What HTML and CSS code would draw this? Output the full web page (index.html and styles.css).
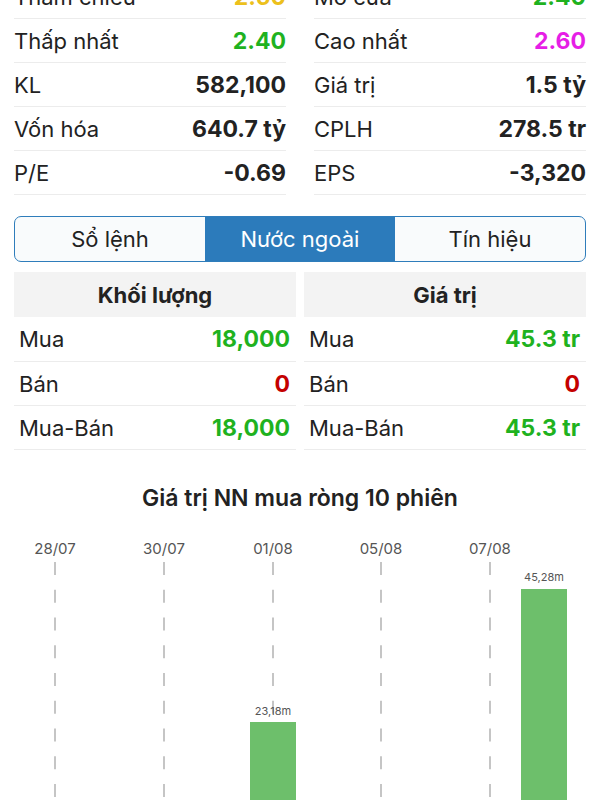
FILE: index.html
```html
<!DOCTYPE html>
<html lang="vi">

<head>
    <meta charset="UTF-8">
    <meta name="viewport" content="width=device-width, initial-scale=1.0">
    <title>Chi tiết mã</title>
    <link rel="stylesheet" href="styles.css">
</head>

<body>
    <div class="stats">
        <div class="stat-col">
            <div class="stat-row"><span>Tham chiếu</span><b class="ref">2.50</b></div>
            <div class="stat-row"><span>Thấp nhất</span><b class="up">2.40</b></div>
            <div class="stat-row"><span>KL</span><b>582,100</b></div>
            <div class="stat-row"><span>Vốn hóa</span><b>640.7 tỷ</b></div>
            <div class="stat-row"><span>P/E</span><b>-0.69</b></div>
        </div>
        <div class="stat-col">
            <div class="stat-row"><span>Mở cửa</span><b class="up">2.40</b></div>
            <div class="stat-row"><span>Cao nhất</span><b class="ceil">2.60</b></div>
            <div class="stat-row"><span>Giá trị</span><b>1.5 tỷ</b></div>
            <div class="stat-row"><span>CPLH</span><b>278.5 tr</b></div>
            <div class="stat-row"><span>EPS</span><b>-3,320</b></div>
        </div>
    </div>

    <div class="tabs">
        <div class="tab">Sổ lệnh</div>
        <div class="tab active">Nước ngoài</div>
        <div class="tab">Tín hiệu</div>
    </div>

    <div class="foreign">
        <div class="foreign-col">
            <div class="foreign-head">Khối lượng</div>
            <div class="foreign-row"><span>Mua</span><b class="up">18,000</b></div>
            <div class="foreign-row"><span>Bán</span><b class="down">0</b></div>
            <div class="foreign-row"><span>Mua-Bán</span><b class="up">18,000</b></div>
        </div>
        <div class="foreign-col">
            <div class="foreign-head">Giá trị</div>
            <div class="foreign-row"><span>Mua</span><b class="up">45.3 tr</b></div>
            <div class="foreign-row"><span>Bán</span><b class="down">0</b></div>
            <div class="foreign-row"><span>Mua-Bán</span><b class="up">45.3 tr</b></div>
        </div>
    </div>

    <h2 class="chart-title">Giá trị NN mua ròng 10 phiên</h2>

    <svg class="chart" width="600" height="340" viewBox="0 0 600 340">
        <g class="grid">
            <line x1="55" y1="33" x2="55" y2="332" />
            <line x1="164" y1="33" x2="164" y2="332" />
            <line x1="273" y1="33" x2="273" y2="332" />
            <line x1="381" y1="33" x2="381" y2="332" />
            <line x1="490" y1="33" x2="490" y2="332" />
        </g>
        <g class="dates">
            <text x="55" y="25">28/07</text>
            <text x="164" y="25">30/07</text>
            <text x="273" y="25">01/08</text>
            <text x="381" y="25">05/08</text>
            <text x="490" y="25">07/08</text>
        </g>
        <g class="bars">
            <rect x="250" y="193" width="46" height="139" />
            <rect x="521" y="60" width="46" height="272" />
        </g>
        <g class="bar-labels">
            <text x="273" y="186">23,18m</text>
            <text x="544" y="52">45,28m</text>
        </g>
    </svg>
</body>

</html>
```

FILE: styles.css
```css
body {
    margin: 0;
    width: 600px;
    height: 800px;
    overflow: hidden;
    background: #fff;
    color: #222;
    font-family: 'Inter', 'Liberation Sans', sans-serif;
}

.stats {
    display: grid;
    grid-template-columns: 1fr 1fr;
    column-gap: 28px;
    padding: 0 14px;
    margin-top: -25px;
}

.stat-row {
    display: flex;
    justify-content: space-between;
    align-items: center;
    height: 43px;
    border-bottom: 1px solid #ececec;
    font-size: 22px;
}

.stat-row b {
    font-size: 23px;
    font-weight: 700;
}

.ref {
    color: #ecc01c;
}

.up {
    color: #1fb21f;
}

.ceil {
    color: #e61ee6;
}

.down {
    color: #c40000;
}

.tabs {
    display: grid;
    grid-template-columns: 1fr 1fr 1fr;
    margin: 21px 14px 0;
    height: 44px;
    border: 1.5px solid #2f7dbb;
    border-radius: 7px;
    overflow: hidden;
    background: #f9fbfc;
}

.tab {
    display: flex;
    justify-content: center;
    align-items: center;
    font-size: 22px;
}

.tab.active {
    background: #2c7bbb;
    color: #fff;
}

.foreign {
    display: grid;
    grid-template-columns: 1fr 1fr;
    column-gap: 8px;
    padding: 0 14px;
    margin-top: 10px;
}

.foreign-head {
    display: flex;
    justify-content: center;
    align-items: center;
    height: 45px;
    background: #f3f3f3;
    font-size: 22px;
    font-weight: 700;
}

.foreign-row {
    display: flex;
    justify-content: space-between;
    align-items: center;
    height: 43px;
    padding: 0 6px 0 5px;
    border-bottom: 1px solid #ececec;
    font-size: 22px;
}

.foreign-head + .foreign-row {
    height: 44px;
}

.foreign-row b {
    font-size: 23px;
    font-weight: 700;
}

.chart-title {
    margin: 34px 0 0;
    text-align: center;
    font-size: 23px;
    font-weight: 600;
    line-height: 28px;
}

.chart {
    display: block;
    margin-top: 17px;
}

.grid line {
    stroke: #b3b3b3;
    stroke-width: 1.5;
    stroke-dasharray: 13 14.75;
}

.dates text {
    font-size: 15px;
    fill: #555;
    text-anchor: middle;
}

.bars rect {
    fill: #6dbf6b;
}

.bar-labels text {
    font-size: 11px;
    fill: #555;
    text-anchor: middle;
}
```
